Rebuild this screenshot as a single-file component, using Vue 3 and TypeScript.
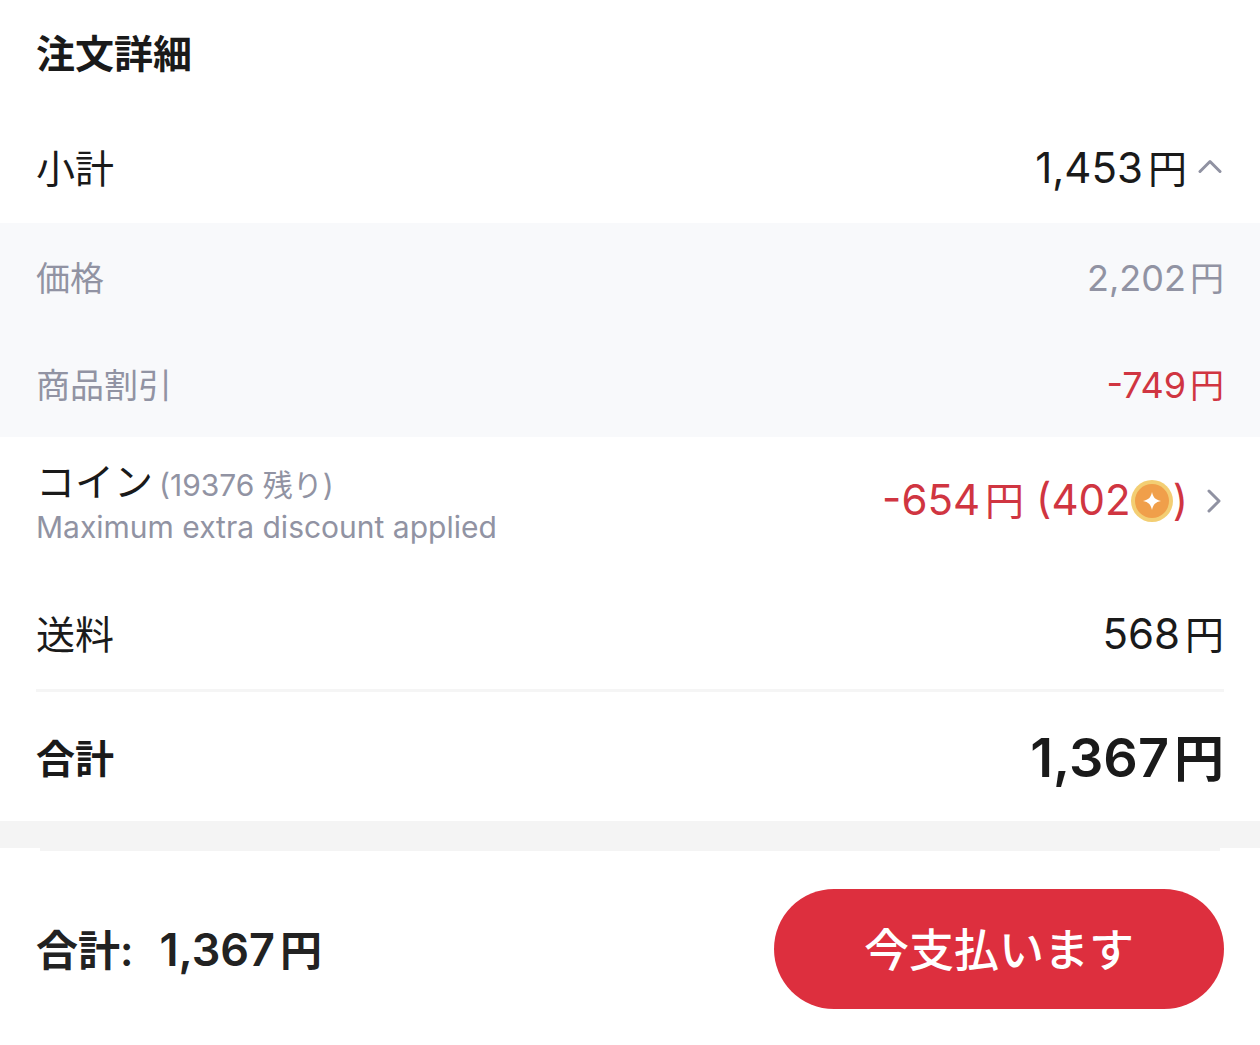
<script setup lang="ts">
import { ref } from 'vue'

interface PriceLine {
  label: string
  amount: string
  discount?: boolean
}

const breakdownOpen = ref(true)

const breakdown: PriceLine[] = [
  { label: '価格', amount: '2,202' },
  { label: '商品割引', amount: '-749', discount: true },
]
</script>

<template>
  <main class="order">
    <h1 class="title">注文詳細</h1>

    <div class="row subtotal">
      <span id="subtotal-label">小計</span>
      <button
        class="plain amount"
        type="button"
        aria-labelledby="subtotal-label"
        :aria-expanded="breakdownOpen"
        @click="breakdownOpen = !breakdownOpen"
      >
        1,453<span class="yen">円</span>
        <svg class="chevron-up" :class="{ closed: !breakdownOpen }" width="24" height="20" viewBox="0 0 24 20" aria-hidden="true">
          <path d="M2 12.500 12 2.500 22 12.500" />
        </svg>
      </button>
    </div>

    <div v-if="breakdownOpen" class="breakdown">
      <div v-for="line in breakdown" :key="line.label" class="row detail">
        <span>{{ line.label }}</span>
        <span class="amount" :class="{ discount: line.discount }">{{ line.amount }}<span class="yen">円</span></span>
      </div>
    </div>

    <div class="row coins">
      <div class="coin-info">
        <p class="coin-name">コイン<small>(19376 残り)</small></p>
        <p class="coin-note">Maximum extra discount applied</p>
      </div>
      <button class="plain amount discount" type="button">
        -654<span class="yen">円</span><span class="coin-count">(402</span>
        <svg class="coin" width="42" height="42" viewBox="0 0 42 42" aria-hidden="true">
          <circle cx="21" cy="21" r="21" fill="#f3ce73" />
          <circle cx="21" cy="21" r="17" fill="#f09f4a" />
          <path d="M21 12C22.200 17.600 24.400 19.800 30 21 24.400 22.200 22.200 24.400 21 30 19.800 24.400 17.600 22.200 12 21 17.600 19.800 19.800 17.600 21 12Z" fill="#fff" />
        </svg>)
        <svg class="chevron-right" width="16" height="26" viewBox="0 0 16 26" aria-hidden="true">
          <path d="M3 3 13 13 3 23" />
        </svg>
      </button>
    </div>

    <div class="row shipping">
      <span>送料</span>
      <span class="amount">568<span class="yen">円</span></span>
    </div>

    <div class="row total">
      <strong>合計</strong>
      <strong class="amount">1,367<span class="yen">円</span></strong>
    </div>

    <div class="band"></div>

    <footer class="checkout">
      <strong class="sum"><span>合計:</span><span class="amount">1,367<span class="yen">円</span></span></strong>
      <button class="pay" type="button">今支払います</button>
    </footer>
  </main>
</template>

<style>
body {
  background: #fff;
}
</style>

<style scoped>
.order {
  color: #1a1a1a;
  font-family: Inter, 'Noto Sans CJK JP', sans-serif;
  font-size: 39px;
  line-height: 48px;
}

.title {
  margin: 0;
  padding: 30px 36px 34px;
  font-size: 39px;
  font-weight: 700;
}

.row {
  display: flex;
  box-sizing: border-box;
  align-items: center;
  justify-content: space-between;
  padding: 0 36px;
}

.plain {
  padding: 0 2px 0 0;
  border: 0;
  background: none;
  color: inherit;
  font-family: inherit;
  line-height: inherit;
  cursor: pointer;
}

.amount {
  display: flex;
  align-items: baseline;
  font-size: 42px;
  white-space: nowrap;
}

.yen {
  margin-left: 5px;
  font-size: 39px;
}

svg {
  flex: none;
  align-self: center;
}

.chevron-up,
.chevron-right {
  fill: none;
  stroke: #9092a2;
  stroke-width: 3;
  stroke-linecap: round;
  stroke-linejoin: round;
}

.chevron-up {
  margin-left: 11px;
}

.chevron-up.closed {
  transform: rotate(180deg);
}

.subtotal {
  height: 111px;
  padding-top: 2px;
}

.breakdown {
  background: #f8f9fb;
  color: #9193a3;
}

.detail {
  height: 107px;
  padding-top: 4px;
  font-size: 34px;
}

.detail .amount {
  font-size: 36px;
}

.detail .yen {
  margin-left: 4px;
  font-size: 34px;
}

.discount,
.detail .discount {
  color: #d03541;
}

.coins {
  height: 127px;
}

.coin-info {
  padding-top: 6px;
}

.coin-info p {
  margin: 0;
}

.coin-info .coin-name {
  line-height: 44px;
}

.coin-name small {
  margin-left: 6px;
  color: #9193a3;
  font-size: 30px;
}

.coin-info .coin-note {
  color: #9193a3;
  font-size: 30px;
  line-height: 40px;
}

.coin-count {
  margin-left: 12px;
}

.chevron-right {
  margin-left: 18px;
}

.shipping {
  height: 114px;
  margin: 14px 36px 0;
  padding: 2px 0 0;
  border-bottom: 3px solid #f5f5f5;
}

.total {
  height: 129px;
  padding-top: 4px;
}

.total .amount {
  font-size: 54px;
  font-weight: 600;
}

.total .yen {
  font-size: 50px;
}

.band {
  height: 27px;
  background: #f4f4f4;
}

.checkout {
  display: grid;
  grid-template-columns: 1fr 450px;
  align-items: center;
  padding: 0 36px 36px;
  color: #222;
}

.checkout::before {
  grid-column: 1 / -1;
  height: 3px;
  margin: 0 4px 38px;
  background: #f4f4f4;
  content: '';
}

.sum {
  display: flex;
  align-items: baseline;
  gap: 26px;
  padding-top: 2px;
  font-size: 42px;
  font-weight: 600;
}

.sum .amount {
  font-size: 45px;
}

.sum .yen {
  font-size: 42px;
}

.pay {
  height: 120px;
  padding: 0 0 4px;
  border: 0;
  border-radius: 60px;
  background: #dd2f3e;
  color: #fff;
  font-family: inherit;
  font-size: 45px;
  font-weight: 500;
  cursor: pointer;
}
</style>
